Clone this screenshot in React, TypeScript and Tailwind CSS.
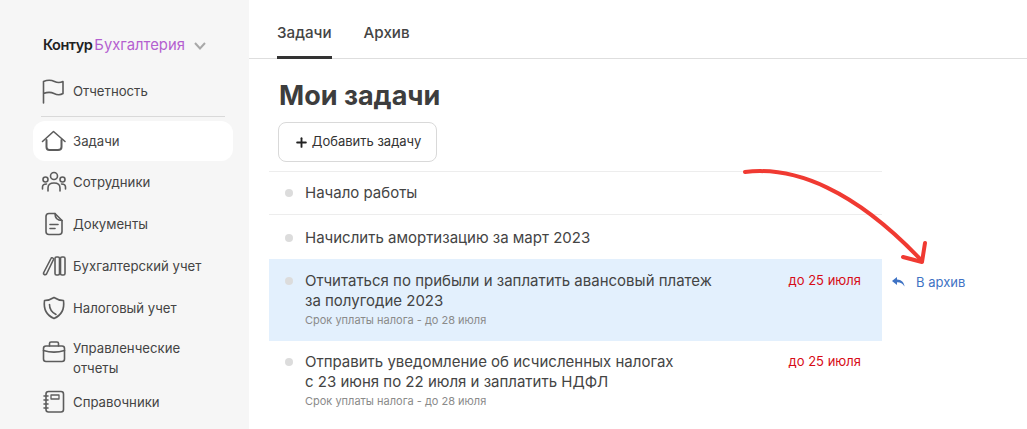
import { Plus } from "lucide-react";
import type { ReactNode } from "react";

const stroke = {
  fill: "none",
  stroke: "#5c5c5c",
  strokeWidth: 1.6,
  strokeLinecap: "round" as const,
  strokeLinejoin: "round" as const,
};

function Icon({ children }: { children: ReactNode }) {
  return (
    <svg width="26" height="26" viewBox="0 0 26 26" className="shrink-0" {...stroke}>
      {children}
    </svg>
  );
}

const icons = {
  flag: (
    <Icon>
      <path d="M2.500 25V3.500C7 1.500 10.500 2 13.500 3.500C16.500 5 19 5 22 3.500V15.500C19 17.500 16 17 13 15.500C10 14 6.500 14 2.500 15.500" />
    </Icon>
  ),
  home: (
    <Icon>
      <path d="M1.500 13.500L12.500 3.500L24 13.500" />
      <path d="M5.500 12V19C5.500 21 6.500 22 8.500 22H17C19 22 20.500 21 20.500 19V12" strokeWidth={2} />
    </Icon>
  ),
  people: (
    <Icon>
      <circle cx="13" cy="7" r="3.500" />
      <circle cx="4.500" cy="10.500" r="2.500" />
      <circle cx="21.500" cy="10.500" r="2.500" />
      <path d="M7 22V19C7 15.500 10 14 13 14C16 14 19 15.500 19 19V22" />
      <path d="M1.500 20V18C1.500 16 3 15 5.500 15" />
      <path d="M24.500 20V18C24.500 16 23 15 20.500 15" />
    </Icon>
  ),
  doc: (
    <Icon>
      <path d="M14 2.500H8C6 2.500 5 3.500 5 5.500V20.500C5 22.500 6 23.500 8 23.500H18C20 23.500 21 22.500 21 20.500V9.500C17 9.500 14 8 14 2.500Z" />
      <path d="M14 2.500L21 9.500" />
      <path d="M9 13.500H17" />
      <path d="M9 17.500H14" />
    </Icon>
  ),
  books: (
    <Icon>
      <path d="M2.500 20L10 5.500C10.500 4 13 5 12.500 6.500L5.500 21C4.500 22.500 2 21.500 2.500 20Z" />
      <rect x="14" y="4" width="4.500" height="18" rx="1.500" />
      <rect x="19.500" y="4" width="4.500" height="18" rx="1.500" />
    </Icon>
  ),
  shield: (
    <Icon>
      <path d="M13 2.500C16 4.500 19 5.500 22.500 5.500C23.500 13 21 20 13 23.500C5 20 2.500 13 3.500 5.500C7 5.500 10 4.500 13 2.500Z" />
      <path d="M8.500 9.500C8.500 14 11 17.500 15 19.500" />
    </Icon>
  ),
  case: (
    <Icon>
      <rect x="2.500" y="7" width="21" height="15.500" rx="2.500" />
      <path d="M2.500 11.500C9 13.500 17 13.500 23.500 11.500" />
      <path d="M8.500 7V4.500C8.500 3.500 9 3 10 3H16C17 3 17.500 3.500 17.500 4.500V7" />
    </Icon>
  ),
  notebook: (
    <Icon>
      <rect x="5" y="2.500" width="17.500" height="20.500" rx="2.500" />
      <rect x="10" y="6" width="8" height="4" strokeWidth={1.300} />
      <path d="M3 7H7M3 11H7M3 15H7M3 19H7" />
    </Icon>
  ),
};

function NavItem({
  icon,
  label,
  active,
  className,
}: {
  icon: ReactNode;
  label: ReactNode;
  active?: boolean;
  className?: string;
}) {
  return (
    <div
      className={`flex items-center gap-[6px] rounded-xl pl-[8px] pr-2 text-[13.200px] leading-[20px] text-[#444] ${
        active ? "bg-white" : ""
      } ${className ?? ""}`}
    >
      {icon}
      <span>{label}</span>
    </div>
  );
}

function Task({
  title,
  note,
  due,
  selected,
  border,
  className,
}: {
  title: ReactNode;
  note?: string;
  due?: string;
  selected?: boolean;
  border?: boolean;
  className?: string;
}) {
  return (
    <div
      className={`flex items-start pl-[16px] pr-[21px] ${selected ? "bg-[#e3f0fd]" : ""} ${
        border ? "border-t border-[#ededed]" : ""
      } ${className ?? ""}`}
    >
      <span className="mt-[6px] h-2 w-2 shrink-0 rounded-full bg-[#dcdcdc]" />
      <div className="ml-[12px] flex-1">
        <div className="text-[15px] leading-[20px] text-[#444]">{title}</div>
        {note && <div className="mt-[2px] text-[11px] leading-[15px] text-[#8a8a8a]">{note}</div>}
      </div>
      {due && <div className="-mt-[1px] text-[13px] leading-[20px] text-[#d70c17]">{due}</div>}
    </div>
  );
}

export default function App() {
  return (
    <div className="relative flex h-[429px] w-[1027px] overflow-hidden bg-white font-['Inter','Noto_Sans',sans-serif]">
      <aside className="w-[249px] shrink-0 bg-[#f6f6f6] pl-[33px] pr-[16px]">
        <div className="flex h-[92px] items-center pl-[10px] pb-[2px]">
          <span className="text-[14.500px] font-semibold tracking-[-0.5px] text-[#222]">Контур</span>
          <span className="ml-[2px] text-[14.800px] text-[#b45fd0]">Бухгалтерия</span>
          <svg width="12" height="8" viewBox="0 0 12 8" className="ml-[9px] mt-[1px]" fill="none" stroke="#a8a8a8" strokeWidth="2">
            <path d="M1 1L6 6.500L11 1" />
          </svg>
        </div>
        <NavItem icon={icons.flag} label="Отчетность" className="-mt-[14px] h-[26px]" />
        <div className="ml-[8px] mr-[8px] mt-[12px] h-px bg-[#d9d9d9]" />
        <NavItem icon={icons.home} label="Задачи" active className="mt-[4px] h-[40px]" />
        <NavItem icon={icons.people} label="Сотрудники" className="mt-[8px] h-[26px]" />
        <NavItem icon={icons.doc} label="Документы" className="mt-[16px] h-[26px]" />
        <NavItem icon={icons.books} label="Бухгалтерский учет" className="mt-[16px] h-[26px]" />
        <NavItem icon={icons.shield} label="Налоговый учет" className="mt-[16px] h-[26px]" />
        <NavItem
          icon={<div className="-mt-[13px]">{icons.case}</div>}
          label={
            <>
              Управленческие
              <br />
              отчеты
            </>
          }
          className="mt-[17px] h-[40px]"
        />
        <NavItem icon={icons.notebook} label="Справочники" className="mt-[11px] h-[26px]" />
      </aside>

      <main className="flex-1">
        <div className="flex h-[59px] gap-[32px] border-b border-[#dedede] pl-[28px]">
          <div className="h-[59px] border-b-[3px] border-[#333] pt-[23px] text-[15.200px] font-medium leading-[20px] text-[#444]">
            Задачи
          </div>
          <div className="pt-[23px] text-[15.200px] font-medium leading-[20px] text-[#444]">Архив</div>
        </div>

        <div className="w-[633px] pl-[20px]">
          <h1 className="ml-[10px] mt-[20px] text-[27px] font-bold leading-[34px] text-[#3d3d3d]">Мои задачи</h1>
          <button className="ml-[9px] mt-[9px] flex h-[40px] w-[159px] items-center justify-center gap-[3px] rounded-lg border border-[#d9d9d9] text-[13px] text-[#333]">
            <Plus size={15} strokeWidth={3} color="#222" />
            Добавить задачу
          </button>
          <div className="mt-[9px]">
            <Task title="Начало работы" border className="h-[43px] pt-[11px]" />
            <Task title="Начислить амортизацию за март 2023" border className="h-[45px] pt-[13px]" />
            <Task
              selected
              title={
                <>
                  Отчитаться по прибыли и заплатить авансовый платеж
                  <br />
                  за полугодие 2023
                </>
              }
              note="Срок уплаты налога - до 28 июля"
              due="до 25 июля"
              className="h-[82px] pt-[12px]"
            />
            <Task
              title={
                <>
                  Отправить уведомление об исчисленных налогах
                  <br />с 23 июня по 22 июля и заплатить НДФЛ
                </>
              }
              note="Срок уплаты налога - до 28 июля"
              due="до 25 июля"
              className="pt-[11px]"
            />
          </div>
        </div>
      </main>

      <div className="absolute left-[892px] top-[272px] flex items-center gap-[11px] text-[13px] leading-[20px] text-[#3f73c4]">
        <svg width="13" height="10" viewBox="0 0 13 10" fill="#3f73c4">
          <path d="M5 0L0 4L5 8V5.200C8 5 10.500 6 12.500 9.500C12 5.500 9.500 2.800 5 2.600Z" />
        </svg>
        В архив
      </div>

      <svg className="absolute left-[740px] top-[165px]" width="200" height="120" viewBox="0 0 200 120" fill="none" stroke="#f03a32" strokeWidth="4" strokeLinecap="round" strokeLinejoin="round">
        <path d="M5 7C55 1 115 25 182 96" />
        <path d="M185 78L182 97L163 92" />
      </svg>
    </div>
  );
}
